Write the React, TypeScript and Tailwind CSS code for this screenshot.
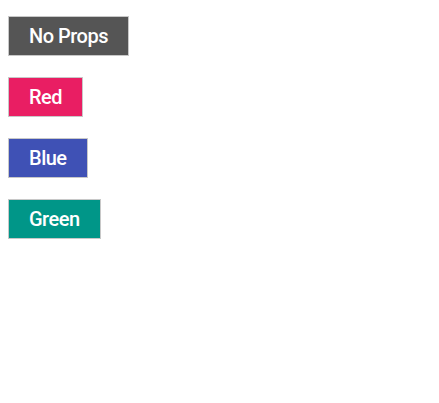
import React from "react";

const buttons = [
  { label: "No Props", cls: "bg-[#555555]" },
  { label: "Red", cls: "bg-[#e91e63]" },
  { label: "Blue", cls: "bg-[#3f51b5]" },
  { label: "Green", cls: "bg-[#009688]" },
];

export default function App() {
  return (
    <div className="min-h-[403px] bg-white pl-2 pt-4 flex flex-col items-start gap-[21px] font-['Roboto',Arial,sans-serif]">
      {buttons.map((b) => (
        <button
          key={b.label}
          className={`${b.cls} h-10 px-5 border border-[#c8c8c8] text-white text-[20px] leading-none font-medium tracking-[-0.5px]`}
        >
          {b.label}
        </button>
      ))}
    </div>
  );
}
